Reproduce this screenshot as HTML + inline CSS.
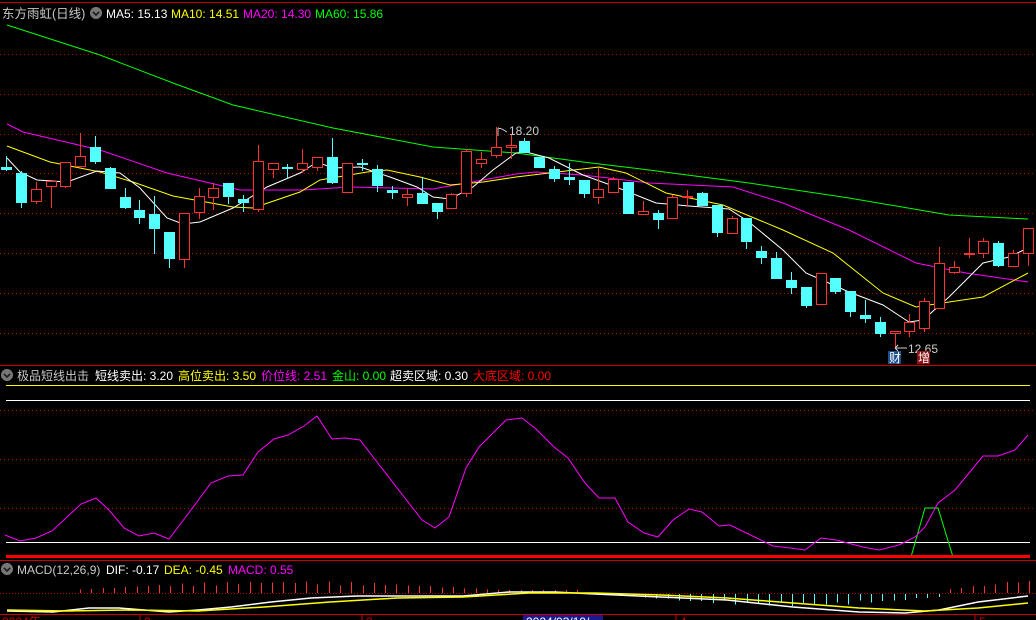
<!DOCTYPE html><html><head><meta charset="utf-8"><style>
html,body{margin:0;padding:0;background:#000;width:1036px;height:620px;overflow:hidden}
svg{display:block}
text{font-family:"Liberation Sans","Noto Sans CJK SC",sans-serif;font-size:12px}
</style></head><body>
<svg id="s" width="1036" height="620" viewBox="0 0 1036 620" xmlns="http://www.w3.org/2000/svg" shape-rendering="crispEdges">
<rect width="1036" height="620" fill="#000"/>
<line x1="0" y1="2.5" x2="1036" y2="2.5" stroke="#b00" />
<g id="grid" stroke="#a00" stroke-dasharray="1,3"></g>
<g id="ma" fill="none" stroke-width="1" shape-rendering="auto"></g>
<g id="cd"></g>
<text x="2" y="18" fill="#c8c8c8" style="font-size:12.5px">东方雨虹(日线)</text>
<circle cx="96" cy="13" r="6" fill="#777"/><path d="M93 12 l3 3 l3-3" stroke="#222" stroke-width="1.5" fill="none"/>
<text x="106" y="18" fill="#fff">MA5: 15.13</text>
<text x="171" y="18" fill="#ff0">MA10: 14.51</text>
<text x="243" y="18" fill="#f0f">MA20: 14.30</text>
<text x="315" y="18" fill="#0f0">MA60: 15.86</text>
<text x="509" y="135" fill="#ccc">18.20</text>
<path d="M498 128 v8 M498 128 l4 1 l5 3" stroke="#ccc" fill="none"/>
<text x="908" y="353" fill="#ccc">12.65</text>
<path d="M895 348 h12 M895 348 l3-3 M895 348 l3 3" stroke="#ccc" fill="none"/>
<rect x="888" y="351" width="13" height="13" fill="#1e4f8c"/><text x="889" y="362" fill="#fff">财</text>
<rect x="917" y="351" width="13" height="13" fill="#8c1010"/><text x="918" y="362" fill="#fff">增</text>
<line x1="0" y1="365.5" x2="1036" y2="365.5" stroke="#c00"/>
<circle cx="7" cy="375" r="6" fill="#777"/><path d="M4 374 l3 3 l3-3" stroke="#222" stroke-width="1.5" fill="none"/>
<text x="17" y="380" fill="#c8c8c8">极品短线出击</text>
<text x="95" y="380" fill="#fff">短线卖出: 3.20</text>
<text x="178" y="380" fill="#ff0">高位卖出: 3.50</text>
<text x="261" y="380" fill="#f0f">价位线: 2.51</text>
<text x="332" y="380" fill="#0f0">金山: 0.00</text>
<text x="390" y="380" fill="#fff">超卖区域: 0.30</text>
<text x="473" y="380" fill="#f00">大底区域: 0.00</text>
<line x1="6" y1="385.5" x2="1030" y2="385.5" stroke="#ff0" stroke-width="1.3"/>
<line x1="6" y1="400.5" x2="1030" y2="400.5" stroke="#fff" stroke-width="1.3"/>
<line x1="6" y1="542.5" x2="1030" y2="542.5" stroke="#fff" stroke-width="1.3"/>
<polyline shape-rendering="auto" fill="none" stroke="#0f0" points="911,557 925,508 938,508 953,557"/>
<polyline shape-rendering="auto" fill="none" stroke="#f0f" points="5,535 20,541 36,538 52,531 66,518 81,504 96,498 109,510 124,528 139,536 154,533 169,539 185,518 211,483 228,476 243,475 258,452 274,439 288,435 304,426 317,416 332,439 345,438 360,440 377,462 422,520 435,528 449,517 466,468 479,447 506,420 522,418 535,428 554,447 568,458 585,483 599,498 615,498 628,522 644,533 658,537 673,520 689,509 702,512 719,526 730,525 773,546 790,548 805,550 821,538 836,540 863,547 879,550 899,545 915,537 925,527 938,503 955,490 983,456 998,456 1015,450 1028,435"/>
<line x1="6" y1="556.5" x2="1030" y2="556.5" stroke="#f00" stroke-width="3"/>
<line x1="0" y1="560.5" x2="1036" y2="560.5" stroke="#c00"/>
<circle cx="7" cy="569" r="6" fill="#777"/><path d="M4 568 l3 3 l3-3" stroke="#222" stroke-width="1.5" fill="none"/>
<text x="17" y="574" fill="#c8c8c8">MACD(12,26,9)</text>
<text x="106" y="574" fill="#fff">DIF: -0.17</text>
<text x="164" y="574" fill="#ff0">DEA: -0.45</text>
<text x="228" y="574" fill="#f0f">MACD: 0.55</text>
<line x1="0" y1="593.5" x2="1036" y2="593.5" stroke="#a00" stroke-dasharray="1,2"/>
<g id="hist"></g>
<polyline shape-rendering="auto" fill="none" stroke="#fff" stroke-width="1.5" points="7,611 53,612 89,608 119,608 169,612 198,610 231,607 271,602 311,598 357,596 397,596 463,596 509,592 555,592 595,594 661,597 727,600 793,607 859,612 905,613 939,610 978,602 1028,596"/>
<polyline shape-rendering="auto" fill="none" stroke="#ff0" stroke-width="1.5" points="7,610 66,611 132,610 198,611 264,607 330,602 397,598 463,597 529,593 595,593 661,595 727,598 793,603 859,608 925,611 978,608 1028,603"/>
<line x1="0" y1="614.5" x2="1036" y2="614.5" stroke="#c00"/>
<g stroke="#c00"><line x1="140" y1="614" x2="140" y2="620"/><line x1="362" y1="614" x2="362" y2="620"/><line x1="676" y1="614" x2="676" y2="620"/><line x1="975" y1="614" x2="975" y2="620"/></g>
<rect x="523" y="615" width="80" height="6" fill="#1a1a8c"/>
<text x="2" y="626" fill="#c00">2024年</text><text x="144" y="626" fill="#c00">2</text><text x="366" y="626" fill="#c00">3</text><text x="526" y="626" fill="#fff">2024/03/19/</text><text x="680" y="626" fill="#c00">4</text><text x="979" y="626" fill="#c00">5</text>
</svg>
<script>
var NS="http://www.w3.org/2000/svg";
function el(p,t,a){var e=document.createElementNS(NS,t);for(var k in a)e.setAttribute(k,a[k]);p.appendChild(e);return e;}
var g=document.getElementById('grid');
[54,94,134,173,213,253,293,333,410,459,508].forEach(function(y){el(g,'line',{x1:0,x2:1036,y1:y+.5,y2:y+.5});});
var ma=document.getElementById('ma');
function pl(c,p){el(ma,'polyline',{stroke:c,points:p});}
pl('#0f0',"7,25 100,55 173,83 233,105 333,128 433,147 516,153 583,162 649,170 749,183 849,198 949,215 1028,219");
pl('#f0f',"7,124 23,132 100,150 167,173 240,190 303,190 350,187 433,189 483,180 516,174 536,172 583,175 649,183 733,187 783,203 849,230 916,263 966,273 1028,282");
pl('#ff0',"7,146 50,162 100,172 133,182 173,196 233,207 253,208 300,192 320,180 367,172 387,170 420,177 450,185 483,182 516,177 599,167 626,173 666,193 723,205 783,230 833,253 883,293 916,307 949,302 983,297 1028,273");
pl('#fff',"7,158 20,172 37,180 67,182 97,171 120,173 140,188 167,218 183,224 200,222 233,208 267,187 300,173 317,162 333,168 360,167 390,177 417,187 433,197 450,199 473,187 493,170 516,153 526,152 549,158 583,175 616,187 656,203 689,206 729,209 749,222 783,250 806,273 849,292 883,305 909,322 923,320 949,297 983,263 1009,257 1028,248");
var C=[[6,167,169,'c',156,170],[21,173,202,'c',171,207],[36,189,201,'r',182,203],[51,181,186,'r',181,207],[65,162,186,'r',162,187],[80,156,166,'r',133,166],[95,147,161,'c',136,163],[110,168,188,'c',167,188],[125,197,207,'c',188,208],[139,210,217,'c',200,223],[154,214,228,'c',196,253],[169,232,258,'c',232,267],[184,213,259,'r',213,267],[199,196,212,'r',188,218],[213,188,197,'r',183,209],[228,183,196,'c',183,203],[243,199,202,'c',195,211],[258,161,209,'r',145,211],[273,163,169,'r',163,177],[287,167,168,'c',164,178],[302,163,169,'r',149,172],[317,157,167,'r',157,170],[332,157,182,'c',138,183],[347,163,192,'r',163,192],[362,163,164,'c',159,170],[377,169,185,'c',165,191],[392,190,192,'c',186,198],[407,194,197,'r',188,205],[422,193,203,'c',177,203],[437,203,211,'c',203,218],[451,194,208,'r',193,208],[466,151,193,'r',149,196],[481,159,163,'r',152,167],[496,147,155,'r',127,157],[511,145,147,'r',135,158],[524,141,152,'c',138,152],[539,157,167,'c',157,167],[554,169,178,'c',166,181],[569,177,179,'c',163,184],[584,180,193,'c',180,197],[598,189,197,'r',168,203],[613,179,192,'r',177,192],[628,182,213,'c',182,213],[643,211,214,'r',201,214],[658,213,219,'c',210,228],[672,197,218,'r',195,218],[687,196,197,'r',190,206],[702,193,205,'c',192,205],[717,205,232,'c',205,236],[732,218,233,'r',216,233],[746,218,241,'c',218,248],[761,251,257,'c',246,263],[776,258,278,'c',252,278],[791,280,287,'c',272,293],[806,287,305,'c',287,307],[821,273,304,'r',273,304],[835,278,291,'c',278,293],[850,291,311,'c',291,316],[865,315,318,'c',300,322],[880,322,333,'c',317,336],[895,331,333,'r',331,348],[909,322,331,'r',314,336],[924,301,328,'r',298,331],[939,263,308,'r',247,308],[954,267,272,'r',261,273],[969,253,254,'r',238,257],[983,241,253,'r',238,257],[998,243,265,'c',241,266],[1013,253,266,'r',250,266],[1028,228,253,'r',228,265]];
var cd=document.getElementById('cd');
C.forEach(function(d){var x=d[0],t=d[1],b=d[2],col=d[3]=='c'?'#54ffff':'#ff3232';
if(d[3]=='c'){el(cd,'line',{x1:x+.5,x2:x+.5,y1:d[4],y2:d[5]+1,stroke:col});el(cd,'rect',{x:x-5,y:t,width:11,height:Math.max(b-t,1)+1,fill:col});}
else{el(cd,'line',{x1:x+.5,x2:x+.5,y1:d[4],y2:t,stroke:col});el(cd,'line',{x1:x+.5,x2:x+.5,y1:b+1,y2:d[5]+1,stroke:col});
el(cd,'rect',{x:x-5,y:t,width:11,height:Math.max(b-t,1)+1,fill:col});
if(b-t>1)el(cd,'rect',{x:x-4,y:t+1,width:9,height:b-t-1,fill:'#000'});}});
var h=document.getElementById('hist');
var i=0;for(var x=80;x<1030;x+=11.3){i++;var v;
if(x<500)v=3+9*Math.sin((x-70)/430*Math.PI)*(0.5+0.5*Math.abs(Math.sin(i*1.7)));
else if(x<640)v=(x<580)?3:0;
else if(x<940)v=-(3+9*Math.sin((x-640)/300*Math.PI)*(0.5+0.5*Math.abs(Math.sin(i*1.3))));
else v=3+11*(x-940)/90*(0.6+0.4*Math.abs(Math.sin(i*2.1)));
var xi=Math.round(x)+.5;
if(v>0.6)el(h,'line',{x1:xi,x2:xi,y1:593-v,y2:593,stroke:'#ff3232'});
else if(v<-0.6)el(h,'line',{x1:xi,x2:xi,y1:594,y2:594-v,stroke:'#54ffff'});}
</script>
</body></html>
